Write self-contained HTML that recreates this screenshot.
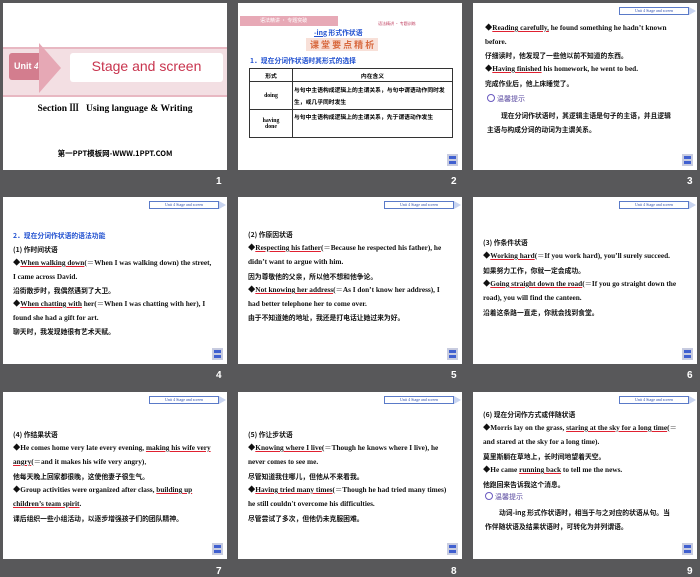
<!DOCTYPE html>
<html><head><meta charset="utf-8"><style>
body{margin:0;width:700px;height:577px;background:#58585a;position:relative;overflow:hidden;font-family:"Liberation Serif","Noto Serif CJK SC",serif;}
.s{position:absolute;width:224px;height:167px;background:#fff;overflow:hidden}
.n{position:absolute;color:#fff;font:bold 10px "Liberation Sans",sans-serif}
.t{position:absolute;font-size:7.3px;color:#111;white-space:nowrap;font-weight:bold}
.c{font-family:"Noto Sans CJK SC",sans-serif;font-size:6.8px}
.u{text-decoration:underline;text-decoration-color:#e02030}
.hd{position:absolute;right:8px;top:4px;width:68px;height:6px;border:1px solid #5a7ac8;font-size:4px;color:#3050b0;text-align:center;line-height:6px}
.hd:after{content:"";position:absolute;right:-8px;top:-1px;border-left:7px solid #c8d4f0;border-top:4px solid transparent;border-bottom:4px solid transparent}
.ic{position:absolute;right:4px;bottom:4px;width:11px;height:12px;background:#c8cce0;font-size:3px;color:#2030c0}
.ic:before{content:"";position:absolute;left:2px;top:2px;width:7px;height:3px;background:#4060d0}
.ic:after{content:"";position:absolute;left:2px;top:7px;width:7px;height:3px;background:#4060d0}
.tip{position:absolute;font-size:7px;color:#5a4aa0;font-family:"Noto Sans CJK SC",sans-serif}
.tip b{display:inline-block;width:6px;height:6px;border:1.5px solid #6a5ac0;border-radius:50%;margin-right:2px;vertical-align:-1px}
</style></head><body>

<div class="s" style="left:3px;top:3px">
 <div style="position:absolute;left:0;top:44px;width:224px;height:46px;background:#f3dfe3;border-top:2px solid #e8b8c2;border-bottom:2px solid #e8b8c2"></div>
 <div style="position:absolute;left:6px;top:50px;width:36px;height:27px;background:#d37d8e;border-radius:3px"></div>
 <div style="position:absolute;left:36px;top:40px;width:0;height:0;border-left:22px solid #e6a8b5;border-top:25px solid transparent;border-bottom:25px solid transparent"></div>
 <div style="position:absolute;left:11px;top:58px;color:#fff;font:bold 9px 'Liberation Sans',sans-serif">Unit <i style="font-family:'Liberation Serif'">4</i></div>
 <div style="position:absolute;left:67px;top:50px;width:153px;height:29px;background:#fff;border-radius:3px"></div>
 <div style="position:absolute;left:67px;top:55px;width:153px;text-align:center;color:#c8344e;font:14px 'Liberation Sans',sans-serif">Stage and screen</div>
 <div style="position:absolute;left:0;width:224px;top:97px;text-align:center;font-weight:bold;font-size:9.5px">Section Ⅲ &nbsp;&nbsp;Using language &amp; Writing</div>
 <div class="c" style="position:absolute;left:0;width:224px;top:145px;text-align:center;font-weight:bold;font-size:7.5px">第一PPT模板网-WWW.1PPT.COM</div>
</div>
<div class="n" style="left:216px;top:176px">1</div>

<div class="s" style="left:238px;top:3px">
 <div class="c" style="position:absolute;left:2px;top:13px;width:98px;height:10px;background:#e7a9b6;color:#fff;font-size:5px;line-height:10px;padding-left:20px;box-sizing:border-box">语法精讲 · 专题突破</div>
 <div class="c" style="position:absolute;left:140px;top:18px;font-size:4px;color:#c04060">语法精讲 · 专题训练</div>
 <div class="t c" style="left:76px;top:24px;color:#2050d0;font-size:6.8px"><span class="u" style="text-decoration-color:#2050d0">-ing</span> 形式作状语</div>
 <div class="t c" style="left:68px;top:35px;color:#d86a40;font-size:9px;background:#f8e0d8;padding:0 4px">课 堂 要 点 精 析</div>
 <div class="t c" style="left:12px;top:52px;color:#2050d0">1．现在分词作状语时其形式的选择</div>
 <table style="position:absolute;left:11px;top:65px;width:204px;border-collapse:collapse;font-size:5.8px;font-family:'Noto Sans CJK SC',sans-serif;font-weight:bold">
  <tr style="height:13px"><td style="border:1px solid #333;width:40px;text-align:center">形式</td><td style="border:1px solid #333;text-align:center">内在含义</td></tr>
  <tr style="height:28px"><td style="border:1px solid #333;text-align:center;font-family:'Liberation Serif'">doing</td><td style="border:1px solid #333;line-height:12px">与句中主语构成逻辑上的主谓关系，与句中谓语动作同时发生，或几乎同时发生</td></tr>
  <tr style="height:28px"><td style="border:1px solid #333;text-align:center;font-family:'Liberation Serif'">having<br>done</td><td style="border:1px solid #333;line-height:12px;vertical-align:top">与句中主语构成逻辑上的主谓关系，先于谓语动作发生</td></tr>
 </table>
 <div class="ic"></div>
</div>
<div class="n" style="left:451px;top:176px">2</div>

<div class="s" style="left:473px;top:3px">
 <div class="hd">Unit 4 Stage and screen</div>
 <div class="t" style="left:12px;top:20px">◆<span class="u">Reading carefully,</span> he found something he hadn’t known</div>
 <div class="t" style="left:12px;top:34px">before.</div>
 <div class="t c" style="left:12px;top:47px">仔细读时，他发现了一些他以前不知道的东西。</div>
 <div class="t" style="left:12px;top:61px">◆<span class="u">Having finished</span> his homework, he went to bed.</div>
 <div class="t c" style="left:12px;top:75px">完成作业后，他上床睡觉了。</div>
 <div class="tip" style="left:14px;top:91px"><b></b>温馨提示</div>
 <div class="t c" style="left:28px;top:107px">现在分词作状语时，其逻辑主语是句子的主语，并且逻辑</div>
 <div class="t c" style="left:14px;top:121px">主语与构成分词的动词为主谓关系。</div>
 <div class="ic"></div>
</div>
<div class="n" style="left:687px;top:176px">3</div>

<div class="s" style="left:3px;top:197px">
 <div class="hd">Unit 4 Stage and screen</div>
 <div class="t c" style="left:10px;top:33px;color:#2050d0">2．现在分词作状语的语法功能</div>
 <div class="t c" style="left:10px;top:47px">(1) 作时间状语</div>
 <div class="t" style="left:10px;top:61px">◆<span class="u">When walking down</span>(＝When I was walking down) the street,</div>
 <div class="t" style="left:10px;top:75px">I came across David.</div>
 <div class="t c" style="left:10px;top:88px">沿街散步时，我偶然遇到了大卫。</div>
 <div class="t" style="left:10px;top:102px">◆<span class="u">When chatting with</span> her(＝When I was chatting with her), I</div>
 <div class="t" style="left:10px;top:116px">found she had a gift for art.</div>
 <div class="t c" style="left:10px;top:129px">聊天时，我发现她很有艺术天赋。</div>
 <div class="ic"></div>
</div>
<div class="n" style="left:216px;top:370px">4</div>

<div class="s" style="left:238px;top:197px">
 <div class="hd">Unit 4 Stage and screen</div>
 <div class="t c" style="left:10px;top:32px">(2) 作原因状语</div>
 <div class="t" style="left:10px;top:46px">◆<span class="u">Respecting his father</span>(＝Because he respected his father), he</div>
 <div class="t" style="left:10px;top:60px">didn’t want to argue with him.</div>
 <div class="t c" style="left:10px;top:74px">因为尊敬他的父亲，所以他不想和他争论。</div>
 <div class="t" style="left:10px;top:88px">◆<span class="u">Not knowing her address</span>(＝As I don’t know her address), I</div>
 <div class="t" style="left:10px;top:102px">had better telephone her to come over.</div>
 <div class="t c" style="left:10px;top:115px">由于不知道她的地址，我还是打电话让她过来为好。</div>
 <div class="ic"></div>
</div>
<div class="n" style="left:451px;top:370px">5</div>

<div class="s" style="left:473px;top:197px">
 <div class="hd">Unit 4 Stage and screen</div>
 <div class="t c" style="left:10px;top:40px">(3) 作条件状语</div>
 <div class="t" style="left:10px;top:54px">◆<span class="u">Working hard</span>(＝If you work hard), you’ll surely succeed.</div>
 <div class="t c" style="left:10px;top:68px">如果努力工作，你就一定会成功。</div>
 <div class="t" style="left:10px;top:82px">◆<span class="u">Going straight down the road</span>(＝If you go straight down the</div>
 <div class="t" style="left:10px;top:96px">road), you will find the canteen.</div>
 <div class="t c" style="left:10px;top:110px">沿着这条路一直走，你就会找到食堂。</div>
 <div class="ic"></div>
</div>
<div class="n" style="left:687px;top:370px">6</div>

<div class="s" style="left:3px;top:392px">
 <div class="hd">Unit 4 Stage and screen</div>
 <div class="t c" style="left:10px;top:37px">(4) 作结果状语</div>
 <div class="t" style="left:10px;top:51px">◆He comes home very late every evening, <span class="u">making his wife very</span></div>
 <div class="t" style="left:10px;top:65px"><span class="u">angry</span>(＝and it makes his wife very angry)．</div>
 <div class="t c" style="left:10px;top:79px">他每天晚上回家都很晚，这使他妻子很生气。</div>
 <div class="t" style="left:10px;top:93px">◆Group activities were organized after class, <span class="u">building up</span></div>
 <div class="t" style="left:10px;top:107px"><span class="u">children’s team spirit</span>.</div>
 <div class="t c" style="left:10px;top:121px">课后组织一些小组活动，以逐步增强孩子们的团队精神。</div>
 <div class="ic"></div>
</div>
<div class="n" style="left:216px;top:566px">7</div>

<div class="s" style="left:238px;top:392px">
 <div class="hd">Unit 4 Stage and screen</div>
 <div class="t c" style="left:10px;top:37px">(5) 作让步状语</div>
 <div class="t" style="left:10px;top:51px">◆<span class="u">Knowing where I live</span>(＝Though he knows where I live), he</div>
 <div class="t" style="left:10px;top:65px">never comes to see me.</div>
 <div class="t c" style="left:10px;top:79px">尽管知道我住哪儿，但他从不来看我。</div>
 <div class="t" style="left:10px;top:93px">◆<span class="u">Having tried many times</span>(＝Though he had tried many times)</div>
 <div class="t" style="left:10px;top:107px">he still couldn't overcome his difficulties.</div>
 <div class="t c" style="left:10px;top:121px">尽管尝试了多次，但他仍未克服困难。</div>
 <div class="ic"></div>
</div>
<div class="n" style="left:451px;top:566px">8</div>

<div class="s" style="left:473px;top:392px">
 <div class="hd">Unit 4 Stage and screen</div>
 <div class="t c" style="left:10px;top:17px">(6) 现在分词作方式或伴随状语</div>
 <div class="t" style="left:10px;top:31px">◆Morris lay on the grass, <span class="u">staring at the sky for a long time</span>(＝</div>
 <div class="t" style="left:10px;top:45px">and stared at the sky for a long time).</div>
 <div class="t c" style="left:10px;top:59px">莫里斯躺在草地上，长时间地望着天空。</div>
 <div class="t" style="left:10px;top:73px">◆He came <span class="u">running back</span> to tell me the news.</div>
 <div class="t c" style="left:10px;top:87px">他跑回来告诉我这个消息。</div>
 <div class="tip" style="left:12px;top:100px"><b></b>温馨提示</div>
 <div class="t c" style="left:26px;top:115px">动词-ing 形式作状语时，相当于与之对应的状语从句。当</div>
 <div class="t c" style="left:12px;top:129px">作伴随状语及结果状语时，可转化为并列谓语。</div>
 <div class="ic"></div>
</div>
<div class="n" style="left:687px;top:566px">9</div>

</body></html>
